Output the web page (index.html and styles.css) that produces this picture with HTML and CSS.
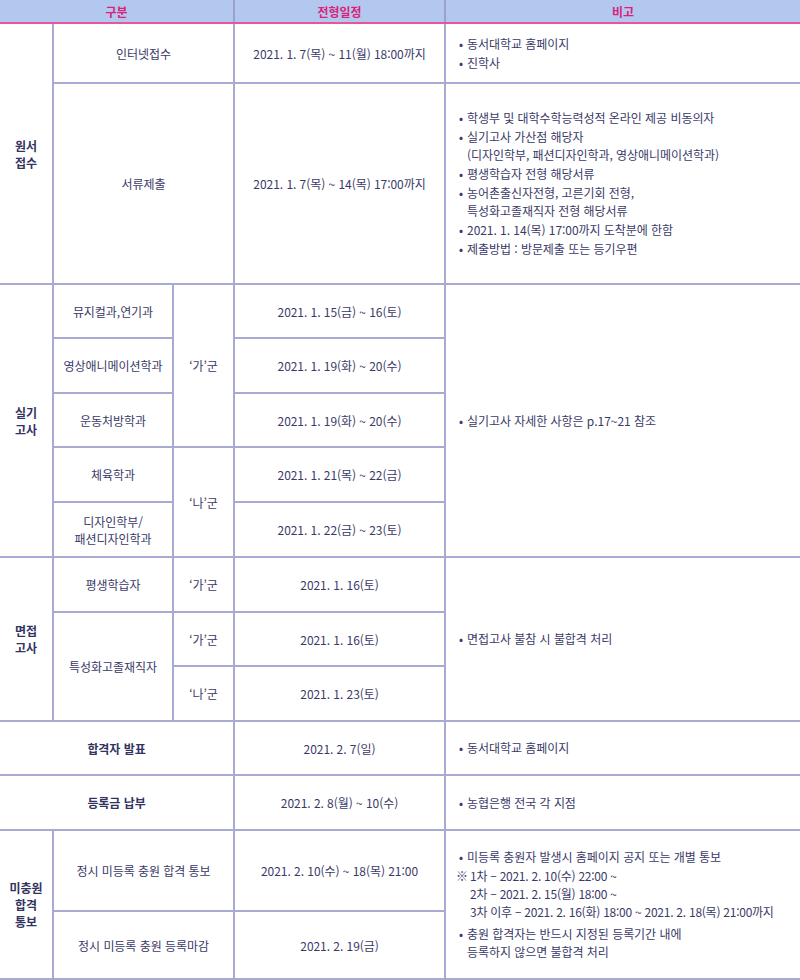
FILE: index.html
```html
<!DOCTYPE html>
<html lang="ko">
<head>
<meta charset="utf-8">
<title>전형일정</title>
<link rel="stylesheet" href="styles.css">
</head>
<body>
<table class="sched">
  <colgroup>
    <col class="c0"><col class="c1"><col class="c2"><col class="c3"><col class="c4">
  </colgroup>
  <thead>
    <tr class="head">
      <th colspan="3">구분</th>
      <th>전형일정</th>
      <th>비고</th>
    </tr>
  </thead>
  <tbody>
    <tr class="h60">
      <td rowspan="2" class="lab">원서<br>접수</td>
      <td colspan="2">인터넷접수</td>
      <td>2021. 1. 7(목) ~ 11(월) 18:00까지</td>
      <td class="note">
        <p class="b">동서대학교 홈페이지</p>
        <p class="b">진학사</p>
      </td>
    </tr>
    <tr class="h201">
      <td colspan="2">서류제출</td>
      <td>2021. 1. 7(목) ~ 14(목) 17:00까지</td>
      <td class="note">
        <p class="b">학생부 및 대학수학능력성적 온라인 제공 비동의자</p>
        <p class="b">실기고사 가산점 해당자<br>(디자인학부, 패션디자인학과, 영상애니메이션학과)</p>
        <p class="b">평생학습자 전형 해당서류</p>
        <p class="b">농어촌출신자전형, 고른기회 전형,<br>특성화고졸재직자 전형 해당서류</p>
        <p class="b">2021. 1. 14(목) 17:00까지 도착분에 한함</p>
        <p class="b">제출방법 : 방문제출 또는 등기우편</p>
      </td>
    </tr>
    <tr class="h54">
      <td rowspan="5" class="lab">실기<br>고사</td>
      <td>뮤지컬과,연기과</td>
      <td rowspan="3">‘가’군</td>
      <td>2021. 1. 15(금) ~ 16(토)</td>
      <td rowspan="5" class="note"><p class="b">실기고사 자세한 사항은 p.17~21 참조</p></td>
    </tr>
    <tr class="h55">
      <td>영상애니메이션학과</td>
      <td>2021. 1. 19(화) ~ 20(수)</td>
    </tr>
    <tr class="h54">
      <td>운동처방학과</td>
      <td>2021. 1. 19(화) ~ 20(수)</td>
    </tr>
    <tr class="h55">
      <td>체육학과</td>
      <td rowspan="2">‘나’군</td>
      <td>2021. 1. 21(목) ~ 22(금)</td>
    </tr>
    <tr class="h55">
      <td>디자인학부/<br>패션디자인학과</td>
      <td>2021. 1. 22(금) ~ 23(토)</td>
    </tr>
    <tr class="h55">
      <td rowspan="3" class="lab">면접<br>고사</td>
      <td>평생학습자</td>
      <td>‘가’군</td>
      <td>2021. 1. 16(토)</td>
      <td rowspan="3" class="note"><p class="b">면접고사 불참 시 불합격 처리</p></td>
    </tr>
    <tr class="h54">
      <td rowspan="2">특성화고졸재직자</td>
      <td>‘가’군</td>
      <td>2021. 1. 16(토)</td>
    </tr>
    <tr class="h55">
      <td>‘나’군</td>
      <td>2021. 1. 23(토)</td>
    </tr>
    <tr class="h54">
      <td colspan="3" class="lab">합격자 발표</td>
      <td>2021. 2. 7(일)</td>
      <td class="note"><p class="b">동서대학교 홈페이지</p></td>
    </tr>
    <tr class="h55">
      <td colspan="3" class="lab">등록금 납부</td>
      <td>2021. 2. 8(월) ~ 10(수)</td>
      <td class="note"><p class="b">농협은행 전국 각 지점</p></td>
    </tr>
    <tr class="h81">
      <td rowspan="2" class="lab">미충원<br>합격<br>통보</td>
      <td colspan="2">정시 미등록 충원 합격 통보</td>
      <td>2021. 2. 10(수) ~ 18(목) 21:00</td>
      <td rowspan="2" class="note">
        <p class="b">미등록 충원자 발생시 홈페이지 공지 또는 개별 통보</p>
        <p class="ref"><span class="mark">※</span>1차 – 2021. 2. 10(수) 22:00 ~<br>2차 – 2021. 2. 15(월) 18:00 ~<br>3차 이후 – 2021. 2. 16(화) 18:00 ~ 2021. 2. 18(목) 21:00까지</p>
        <p class="b gap">충원 합격자는 반드시 지정된 등록기간 내에<br>등록하지 않으면 불합격 처리</p>
      </td>
    </tr>
    <tr class="h68">
      <td colspan="2">정시 미등록 충원 등록마감</td>
      <td>2021. 2. 19(금)</td>
    </tr>
  </tbody>
</table>
</body>
</html>
```
FILE: styles.css
```css
html, body {
  margin: 0;
  padding: 0;
  background: #ffffff;
}
body {
  font-family: "Noto Sans CJK KR", "Noto Sans", sans-serif;
  font-size: 12px;
  color: #3a3a68;
  letter-spacing: -0.05px;
}
.sched {
  width: 800px;
  table-layout: fixed;
  border-collapse: collapse;
}
.c0 { width: 53px; }
.c1 { width: 120px; }
.c2 { width: 61px; }
.c3 { width: 211px; }
.c4 { width: 355px; }
.sched th, .sched td {
  border: 2px solid #a9aad3;
  padding: 0;
  text-align: center;
  vertical-align: middle;
  line-height: 17px;
}
.sched tr > :first-child { border-left: none; }
.sched tr > :last-child { border-right: none; }
.sched tr > td.note { border-right: none; }
.head th {
  height: 22px;
  background: #b3c8ee;
  color: #d8237c;
  font-weight: 700;
  border-top: none;
  border-bottom: 2px solid #e8559a;
  border-left-color: #9d9fcc;
  border-right-color: #9d9fcc;
}
.lab { font-weight: 700; color: #33335f; }
.h60 { height: 60px; }
.h201 { height: 201px; }
.h54 { height: 54px; }
.h55 { height: 55px; }
.h81 { height: 81px; }
.h68 { height: 68px; }
.note {
  text-align: left !important;
  padding-left: 12px !important;
}
.note p {
  margin: 0;
  line-height: 18px;
}
.note p + p { margin-top: 1px; }
.note p.gap { margin-top: 4px; }
.b {
  position: relative;
  padding-left: 9px;
}
.b::before {
  content: "•";
  position: absolute;
  left: 1px;
  top: 0;
}
.ref {
  padding-left: 12px;
  margin-left: -3px;
  position: relative;
  letter-spacing: -0.25px;
}
.mark {
  position: absolute;
  left: -2px;
  top: 0;
}
```
